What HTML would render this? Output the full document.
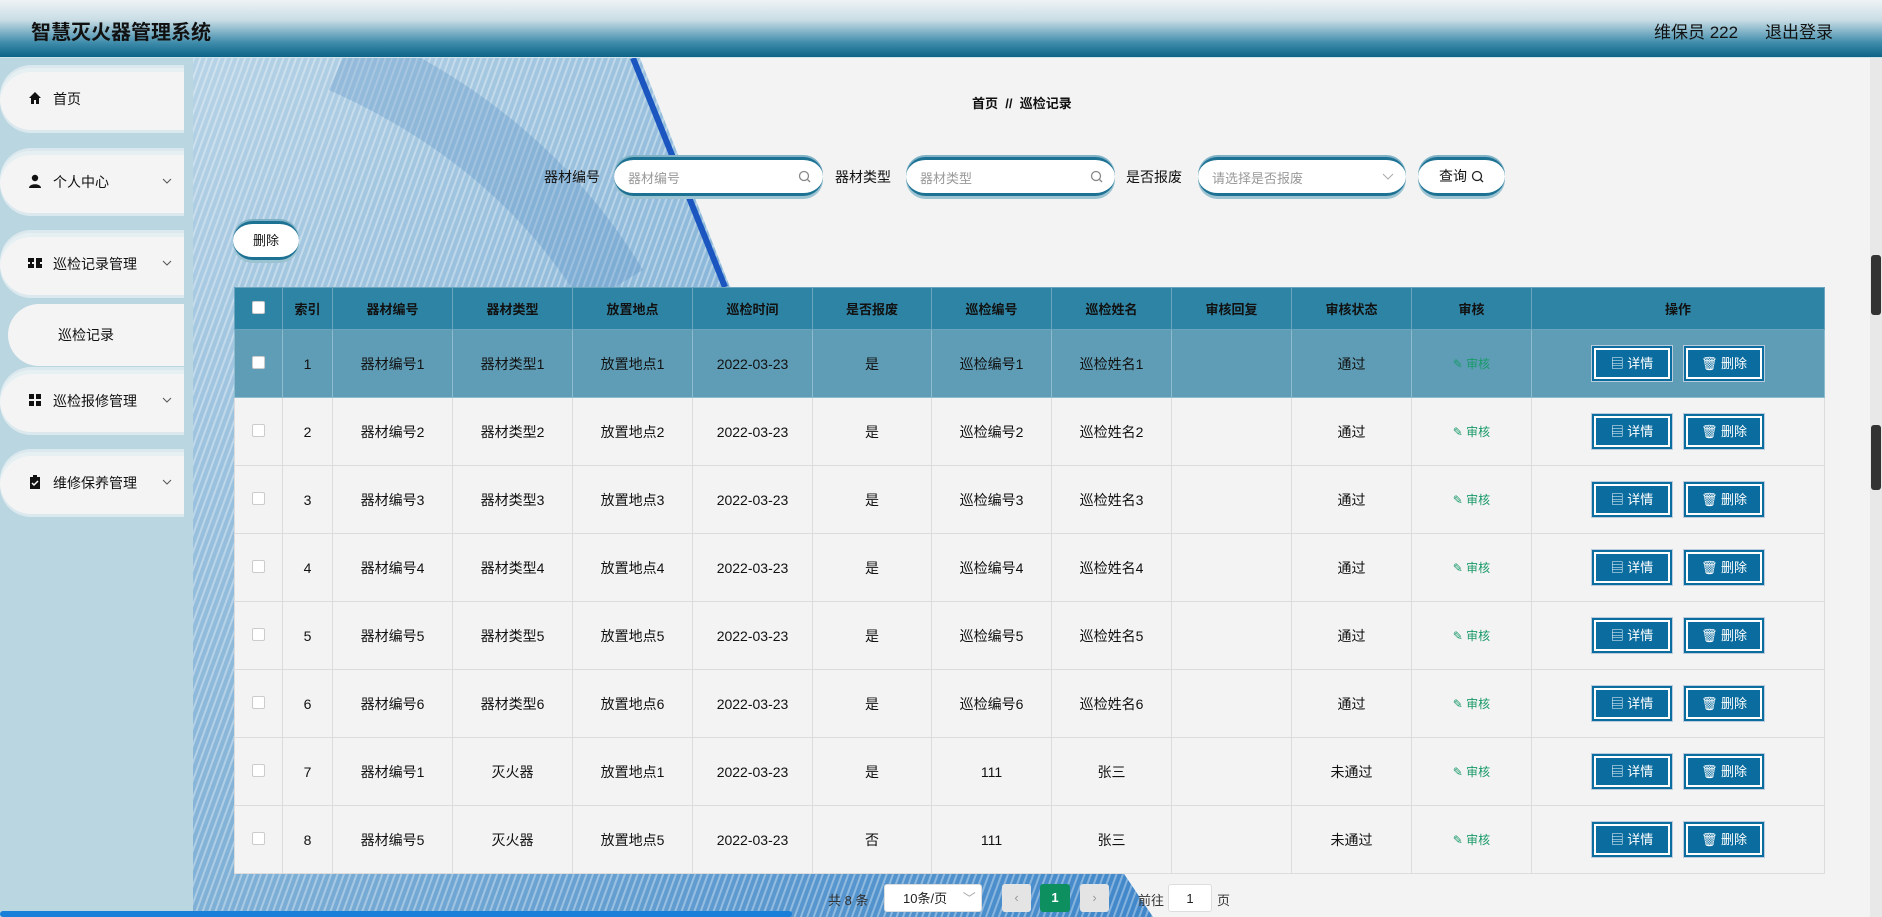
<!DOCTYPE html>
<html><head><meta charset="utf-8"><style>
*{box-sizing:border-box;margin:0;padding:0}
body{width:1882px;height:917px;overflow:hidden;background:#f3f3f3;font-family:"Liberation Sans","Noto Sans CJK SC",sans-serif;color:#222;position:relative}
.hdr{position:absolute;left:0;top:0;width:1882px;height:58px;background:linear-gradient(#eef3f5 0%,#c9dde5 35%,#3f8cab 75%,#0c6387 100%);border-bottom:1px solid #cfe3ea}
.hdr .t{position:absolute;left:31px;top:16px;font-size:20px;font-weight:bold;color:#111}
.hdr .r{position:absolute;top:18px;font-size:17px;color:#111}
.side{position:absolute;left:0;top:58px;width:193px;height:859px;background:#bad6e0}
.it{position:absolute;left:0;width:184px;height:62px;background:#f4f4f4;border-top-left-radius:31px;border-bottom-left-radius:31px;box-shadow:inset 0 4px 0 #e6f0f3,0 -3px 0 #dbe9ee,0 3px 0 #dbe9ee;font-size:14px;color:#111}
.it .ic{position:absolute;left:28px;top:23px;width:14px;height:14px}
.it .tx{position:absolute;left:53px;top:21px}
.it .ar{position:absolute;left:162px;top:27px;width:10px;height:7px}
.bgsvg{position:absolute;left:193px;top:58px}
.crumb{position:absolute;left:972px;top:93px;font-size:13px;font-weight:bold;color:#111}
.lbl{position:absolute;top:167px;font-size:14px;color:#111}
.inp{position:absolute;top:157px;height:39px;background:#fff;border-radius:20px;border-top:3px solid #1d7294;border-bottom:3px solid #1d7294;box-shadow:0 -2px 0 #7fb2c6,0 3px 0 #9cc3d2;font-size:13px;color:#999;padding:8px 14px}
.inp svg{position:absolute;right:12px;top:10px}
.btn{position:absolute;background:#fff;border-radius:20px;border-top:3px solid #1d7294;border-bottom:3px solid #1d7294;box-shadow:0 -2px 0 #7fb2c6,0 3px 0 #9cc3d2;font-size:14px;color:#111;text-align:center}
table{position:absolute;left:234px;top:287px;border-collapse:collapse;width:1591px;table-layout:fixed}
td,th{border:1px solid #dcdcdc;text-align:center;font-size:14px;color:#111;height:68px;background:#f3f3f3}
th{height:42px;background:#2e84a4;border-color:#6aa5bd;font-size:13px;font-weight:bold}
tr.h td{background:#5f9db6;border-color:#8cbccd}
.cb{display:inline-block;width:13px;height:13px;border:1px solid #ccc;background:#fff;border-radius:2px}
.sh{color:#1a9a6a;font-size:12px}
.ob{display:inline-block;width:80px;height:35px;background:#0b6d9f;color:#fff;border:2px solid #0b6d9f;box-shadow:inset 0 0 0 2px #fff;outline:1px solid #bcd;font-size:13px;line-height:31px;margin:0 6px;vertical-align:middle}
.pg{position:absolute;top:884px;font-size:13px;color:#333}
.pb{position:absolute;top:884px;height:28px;border-radius:3px;text-align:center;line-height:28px;font-size:13px}
</style></head><body>
<div class="hdr"><div class="t">智慧灭火器管理系统</div><div class="r" style="left:1654px">维保员 222</div><div class="r" style="left:1765px">退出登录</div></div>
<div class="side">
<div class="it" style="top:10px"><svg class="ic" viewBox="0 0 14 14"><path d="M1 7L7 1l6 6h-2v6H8V9H6v4H3V7z" fill="#111"/></svg><span class="tx">首页</span></div>
<div class="it" style="top:93px"><svg class="ic" viewBox="0 0 14 14"><circle cx="7" cy="4" r="3.2" fill="#111"/><path d="M1 14c0-5 12-5 12 0z" fill="#111"/></svg><span class="tx">个人中心</span><svg class="ar" viewBox="0 0 10 7"><path d="M1 1l4 4 4-4" stroke="#555" fill="none"/></svg></div>
<div class="it" style="top:175px"><svg class="ic" viewBox="0 0 14 14"><path d="M0 2h6v4H4v2h2v4H0V8h2V6H0zM8 2h6v4h-2v2h2v4H8z" fill="#111"/></svg><span class="tx">巡检记录管理</span><svg class="ar" viewBox="0 0 10 7"><path d="M1 1l4 4 4-4" stroke="#555" fill="none"/></svg></div>
<div class="it" style="top:246px;left:8px;width:176px;box-shadow:none;border-radius:31px 0 0 31px"><span class="tx" style="left:50px">巡检记录</span></div>
<div class="it" style="top:312px"><svg class="ic" viewBox="0 0 14 14"><path d="M1 1h5v5H1zM8 1h5v5H8zM1 8h5v5H1zM8 8h5v5H8z" fill="#111"/></svg><span class="tx">巡检报修管理</span><svg class="ar" viewBox="0 0 10 7"><path d="M1 1l4 4 4-4" stroke="#555" fill="none"/></svg></div>
<div class="it" style="top:394px"><svg class="ic" viewBox="0 0 14 14"><path d="M2 2h10v12H2z" fill="#111"/><path d="M5 0h4v3H5z" fill="#111"/><path d="M4 8l2 2 4-4" stroke="#fff" fill="none" stroke-width="1.5"/></svg><span class="tx">维修保养管理</span><svg class="ar" viewBox="0 0 10 7"><path d="M1 1l4 4 4-4" stroke="#555" fill="none"/></svg></div>
</div>
<svg class="bgsvg" width="1000" height="859" viewBox="0 0 1000 859">
<defs><pattern id="st" width="6" height="6" patternUnits="userSpaceOnUse" patternTransform="rotate(20)"><rect width="2" height="6" fill="rgba(255,255,255,.35)"/></pattern>
<linearGradient id="g" x1="0" y1="0" x2="1" y2="1"><stop offset="0" stop-color="#b7d3e6"/><stop offset=".5" stop-color="#7fb0d6"/><stop offset="1" stop-color="#3f86c9"/></linearGradient></defs>
<path d="M0 0H447L537 229L960 859H0z" fill="url(#g)"/>
<path d="M0 0H447L537 229L960 859H0z" fill="url(#st)"/>
<path d="M150 0Q330 80 420 230" stroke="rgba(70,130,190,.25)" stroke-width="70" fill="none"/>
<path d="M440 0L532 229" stroke="#1a55c0" stroke-width="6" fill="none"/>
</svg>
<div class="crumb">首页 &nbsp;<b>//</b>&nbsp; 巡检记录</div>
<div class="lbl" style="left:544px">器材编号</div>
<div class="inp" style="left:614px;width:209px">器材编号<svg width="13" height="13" viewBox="0 0 13 13"><circle cx="6" cy="6" r="4.5" stroke="#888" fill="none" stroke-width="1.3"/><path d="M9.5 9.5l2.5 2.5" stroke="#888" stroke-width="1.3"/></svg></div>
<div class="lbl" style="left:835px">器材类型</div>
<div class="inp" style="left:906px;width:209px">器材类型<svg width="13" height="13" viewBox="0 0 13 13"><circle cx="6" cy="6" r="4.5" stroke="#888" fill="none" stroke-width="1.3"/><path d="M9.5 9.5l2.5 2.5" stroke="#888" stroke-width="1.3"/></svg></div>
<div class="lbl" style="left:1126px">是否报废</div>
<div class="inp" style="left:1198px;width:208px">请选择是否报废<svg width="12" height="8" viewBox="0 0 12 8" style="top:13px"><path d="M1 1l5 5 5-5" stroke="#aaa" fill="none"/></svg></div>
<div class="btn" style="left:1418px;top:157px;width:87px;height:39px;line-height:33px">查询 <svg width="13" height="13" viewBox="0 0 13 13" style="vertical-align:-2px"><circle cx="6" cy="6" r="4.5" stroke="#222" fill="none" stroke-width="1.3"/><path d="M9.5 9.5l2.5 2.5" stroke="#222" stroke-width="1.3"/></svg></div>
<div class="btn" style="left:233px;top:221px;width:66px;height:39px;line-height:33px;font-size:13px">删除</div>
<table>
<colgroup><col style="width:48px"><col style="width:50px"><col style="width:120px"><col style="width:120px"><col style="width:120px"><col style="width:120px"><col style="width:119px"><col style="width:120px"><col style="width:120px"><col style="width:120px"><col style="width:120px"><col style="width:120px"><col></colgroup>
<tr><th><span class="cb"></span></th><th>索引</th><th>器材编号</th><th>器材类型</th><th>放置地点</th><th>巡检时间</th><th>是否报废</th><th>巡检编号</th><th>巡检姓名</th><th>审核回复</th><th>审核状态</th><th>审核</th><th>操作</th></tr>
<tr class="h"><td><span class="cb"></span></td><td>1</td><td>器材编号1</td><td>器材类型1</td><td>放置地点1</td><td>2022-03-23</td><td>是</td><td>巡检编号1</td><td>巡检姓名1</td><td></td><td>通过</td><td class="sh">✎ 审核</td><td><span class="ob">▤ 详情</span><span class="ob">🗑 删除</span></td></tr>
<tr><td><span class="cb"></span></td><td>2</td><td>器材编号2</td><td>器材类型2</td><td>放置地点2</td><td>2022-03-23</td><td>是</td><td>巡检编号2</td><td>巡检姓名2</td><td></td><td>通过</td><td class="sh">✎ 审核</td><td><span class="ob">▤ 详情</span><span class="ob">🗑 删除</span></td></tr>
<tr><td><span class="cb"></span></td><td>3</td><td>器材编号3</td><td>器材类型3</td><td>放置地点3</td><td>2022-03-23</td><td>是</td><td>巡检编号3</td><td>巡检姓名3</td><td></td><td>通过</td><td class="sh">✎ 审核</td><td><span class="ob">▤ 详情</span><span class="ob">🗑 删除</span></td></tr>
<tr><td><span class="cb"></span></td><td>4</td><td>器材编号4</td><td>器材类型4</td><td>放置地点4</td><td>2022-03-23</td><td>是</td><td>巡检编号4</td><td>巡检姓名4</td><td></td><td>通过</td><td class="sh">✎ 审核</td><td><span class="ob">▤ 详情</span><span class="ob">🗑 删除</span></td></tr>
<tr><td><span class="cb"></span></td><td>5</td><td>器材编号5</td><td>器材类型5</td><td>放置地点5</td><td>2022-03-23</td><td>是</td><td>巡检编号5</td><td>巡检姓名5</td><td></td><td>通过</td><td class="sh">✎ 审核</td><td><span class="ob">▤ 详情</span><span class="ob">🗑 删除</span></td></tr>
<tr><td><span class="cb"></span></td><td>6</td><td>器材编号6</td><td>器材类型6</td><td>放置地点6</td><td>2022-03-23</td><td>是</td><td>巡检编号6</td><td>巡检姓名6</td><td></td><td>通过</td><td class="sh">✎ 审核</td><td><span class="ob">▤ 详情</span><span class="ob">🗑 删除</span></td></tr>
<tr><td><span class="cb"></span></td><td>7</td><td>器材编号1</td><td>灭火器</td><td>放置地点1</td><td>2022-03-23</td><td>是</td><td>111</td><td>张三</td><td></td><td>未通过</td><td class="sh">✎ 审核</td><td><span class="ob">▤ 详情</span><span class="ob">🗑 删除</span></td></tr>
<tr><td><span class="cb"></span></td><td>8</td><td>器材编号5</td><td>灭火器</td><td>放置地点5</td><td>2022-03-23</td><td>否</td><td>111</td><td>张三</td><td></td><td>未通过</td><td class="sh">✎ 审核</td><td><span class="ob">▤ 详情</span><span class="ob">🗑 删除</span></td></tr>
</table>
<div class="pg" style="left:828px;top:890px">共 8 条</div>
<div class="pb" style="left:884px;width:98px;background:#fff;border:1px solid #ddd;text-align:left;padding-left:18px">10条/页 <span style="color:#aaa;margin-left:12px">﹀</span></div>
<div class="pb" style="left:1002px;width:29px;background:#e4e4e4;color:#999">‹</div>
<div class="pb" style="left:1040px;width:30px;background:#0e8f60;color:#fff;font-weight:bold">1</div>
<div class="pb" style="left:1080px;width:29px;background:#e4e4e4;color:#999">›</div>
<div class="pg" style="left:1138px;top:890px">前往</div>
<div class="pb" style="left:1168px;width:44px;background:#fff;border:1px solid #ddd">1</div>
<div class="pg" style="left:1217px;top:890px">页</div>
<div style="position:absolute;left:0;top:911px;width:792px;height:6px;background:#1a7fd8;border-radius:3px"></div>
<div style="position:absolute;left:1870px;top:58px;width:12px;height:859px;background:#e8e8e8"></div>
<div style="position:absolute;left:1871px;top:255px;width:10px;height:60px;background:#333;border-radius:3px"></div>
<div style="position:absolute;left:1871px;top:425px;width:10px;height:65px;background:#333;border-radius:3px"></div>
</body></html>
